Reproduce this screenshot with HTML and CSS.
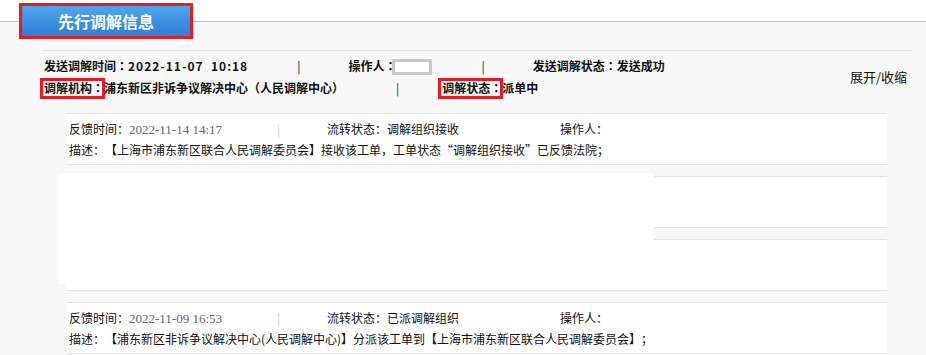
FILE: index.html
```html
<!DOCTYPE html>
<html lang="zh-CN">
<head>
    <meta charset="UTF-8">
    <title>先行调解信息</title>
    <link rel="stylesheet" href="styles.css">
</head>
<body>
<div class="tabbar">
    <div class="tab">先行调解信息</div>
</div>
<div class="panel">
    <div class="summary">
        <div class="summary-rows" lang="zh-Hant">
            <div class="srow">
                <span>发送调解时间：<span class="num">2022-11-07&nbsp;&nbsp;10:18</span></span>
                <span class="sep">|</span>
                <span>操作人：<span class="blank"></span></span>
                <span class="sep">|</span>
                <span>发送调解状态：发送成功</span>
            </div>
            <div class="srow">
                <span><span class="mark">调解机构：</span>浦东新区非诉争议解决中心（人民调解中心）</span>
                <span class="sep wide">|</span>
                <span><span class="mark">调解状态：</span>派单中</span>
            </div>
        </div>
        <a class="toggle">展开/收缩</a>
    </div>

    <div class="records">
        <div class="record">
            <div class="rrow">
                <span class="r-time">反馈时间：<span class="date">2022-11-14 14:17</span></span>
                <span class="r-sep">|</span>
                <span class="r-state">流转状态：调解组织接收</span>
                <span>操作人：</span>
            </div>
            <div class="rrow">描述：【上海市浦东新区联合人民调解委员会】接收该工单，工单状态“调解组织接收”已反馈法院；</div>
        </div>
        <div class="record">
            <div class="rrow"></div>
            <div class="rrow"></div>
        </div>
        <div class="record">
            <div class="rrow"></div>
            <div class="rrow"></div>
        </div>
        <div class="record">
            <div class="rrow">
                <span class="r-time">反馈时间：<span class="date">2022-11-09 16:53</span></span>
                <span class="r-sep">|</span>
                <span class="r-state">流转状态：已派调解组织</span>
                <span>操作人：</span>
            </div>
            <div class="rrow">描述：【浦东新区非诉争议解决中心(人民调解中心)】分派该工单到【上海市浦东新区联合人民调解委员会】；</div>
        </div>
        <div class="mask"></div>
    </div>
</div>
</body>
</html>
```

FILE: styles.css
```css
body {
    margin: 0;
    background: #f8f8f8;
    font-family: "Noto Sans CJK SC", "Liberation Sans", sans-serif;
    font-size: 12px;
    color: #111;
    overflow: hidden;
    text-spacing-trim: space-all;
}
.tabbar {
    height: 21px;
    background: #fff;
    border-bottom: 1px solid #c4c4c4;
    padding-left: 22px;
}
.tab {
    display: inline-block;
    margin-top: 6px;
    width: 168px;
    height: 30px;
    line-height: 30px;
    text-align: center;
    color: #fff;
    font-size: 16px;
    font-weight: bold;
    background: linear-gradient(#4fa6ea, #2f7ed8);
    outline: 3px solid #e51c24;
    position: relative;
}
.panel {
    padding-top: 28px;
}
.summary {
    margin: 0 14px 0 42px;
    border-top: 1px solid #e4e4e4;
    padding: 4px 5px 0 2px;
    display: flex;
    align-items: center;
}
.summary-rows {
    flex: 1;
}
.srow {
    height: 22px;
    line-height: 22px;
    font-family: "Noto Sans CJK TC", "Noto Sans CJK SC", sans-serif;
    font-weight: bold;
    display: flex;
    align-items: center;
}
.num {
    letter-spacing: 1px;
}
.sep {
    font-weight: normal;
    color: #222;
    margin: 0 48px 0 49px;
}
.sep.wide {
    margin: 0 43px 0 52px;
}
.blank {
    display: inline-block;
    width: 34px;
    height: 10px;
    border: 3px solid #c9c9c9;
    background: #fff;
    vertical-align: middle;
    margin: -2px 0 0 -4px;
}
.mark {
    position: relative;
}
.mark::after {
    content: "";
    position: absolute;
    left: -4px;
    right: -1px;
    top: -1px;
    bottom: -3px;
    border: 3px solid #e51c24;
}
.toggle {
    font-size: 13px;
    color: #111;
    margin-top: -2px;
}
.records {
    margin: 14px 39px 0 67px;
    position: relative;
}
.record {
    background: #fff;
    border-top: 1px solid #e4e4e4;
    border-bottom: 1px solid #e4e4e4;
    padding: 4px 2px;
    margin-bottom: 11px;
}
.rrow {
    height: 21px;
    line-height: 21px;
    white-space: nowrap;
    display: flex;
}
.r-time {
    width: 208px;
}
.date {
    font-family: "Liberation Serif", serif;
    font-size: 13px;
    color: #666;
}
.r-sep {
    width: 50px;
    color: #c8c8c8;
}
.r-state {
    width: 233px;
}
.mask {
    position: absolute;
    left: -8px;
    top: 60px;
    width: 595px;
    height: 111px;
    background: #fff;
}
```
